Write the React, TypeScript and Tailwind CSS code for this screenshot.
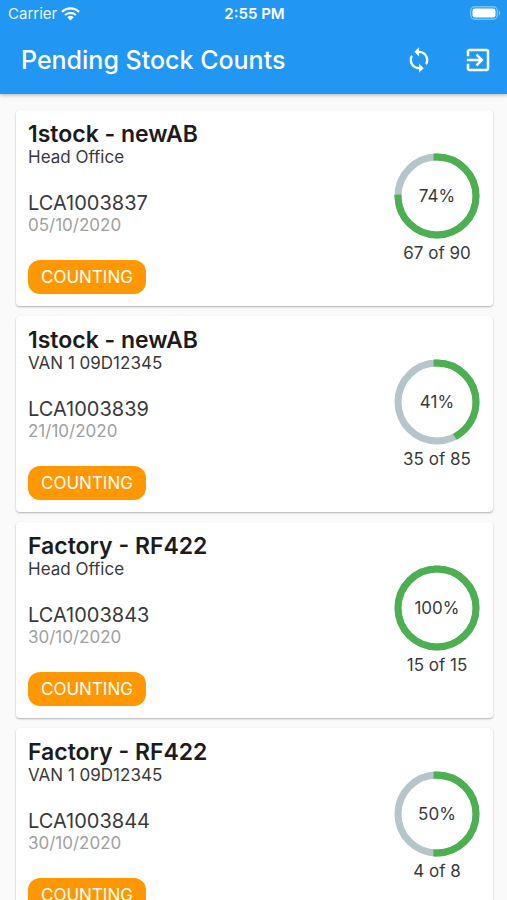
import React from "react";

const stockCounts = [
  {
    id: "LCA1003837",
    title: "1stock - newAB",
    location: "Head Office",
    date: "05/10/2020",
    status: "COUNTING",
    counted: 67,
    total: 90,
  },
  {
    id: "LCA1003839",
    title: "1stock - newAB",
    location: "VAN 1 09D12345",
    date: "21/10/2020",
    status: "COUNTING",
    counted: 35,
    total: 85,
  },
  {
    id: "LCA1003843",
    title: "Factory - RF422",
    location: "Head Office",
    date: "30/10/2020",
    status: "COUNTING",
    counted: 15,
    total: 15,
  },
  {
    id: "LCA1003844",
    title: "Factory - RF422",
    location: "VAN 1 09D12345",
    date: "30/10/2020",
    status: "COUNTING",
    counted: 4,
    total: 8,
  },
];

type StockCount = (typeof stockCounts)[number];

const StatusBar = () => (
  <div className="flex h-7 items-center pl-2 pr-1.5 text-[15px] leading-5">
    <div className="flex flex-1 items-center gap-x-1">
      <span className="text-white/90">Carrier</span>
      <svg viewBox="0 0 19 14" className="h-3.5 w-[19px]" fill="none">
        <path d="M1 4.9a12 12 0 0 1 17 0" stroke="currentColor" strokeWidth="2.2" />
        <path d="M4.1 8.1a7.6 7.6 0 0 1 10.8 0" stroke="currentColor" strokeWidth="2.2" />
        <path d="M9.5 13.4 6.3 10.2a4.7 4.7 0 0 1 6.4 0z" fill="currentColor" />
      </svg>
    </div>
    <span className="font-semibold">2:55 PM</span>
    <div className="flex flex-1 justify-end pb-0.5">
      <svg viewBox="0 0 31 14" className="h-3.5 w-[31px]" fill="none">
        <rect x="0.7" y="0.7" width="26.6" height="12.6" rx="4" stroke="currentColor" strokeWidth="1.4" opacity="0.4" />
        <rect x="2.5" y="2.5" width="23" height="9" rx="2.2" fill="currentColor" />
        <path d="M28.8 4.6c1.9.8 1.9 4 0 4.8z" fill="currentColor" opacity="0.5" />
      </svg>
    </div>
  </div>
);

const AppBar = () => (
  <div className="flex h-[66px] items-center pl-[21px] pr-3.5 pb-0.5">
    <h1 className="flex-1 text-[25px] leading-8 font-medium">
      Pending Stock Counts
    </h1>
    <button type="button" aria-label="Sync" className="mr-[30px]">
      <svg viewBox="0 0 24 24" className="size-7" fill="currentColor">
        <path d="M12 4V1L8 5l4 4V6c3.31 0 6 2.69 6 6 0 1.01-.25 1.97-.7 2.8l1.46 1.46C19.54 15.03 20 13.57 20 12c0-4.42-3.58-8-8-8zm0 14c-3.31 0-6-2.69-6-6 0-1.01.25-1.97.7-2.8L5.24 7.74C4.46 8.97 4 10.43 4 12c0 4.42 3.58 8 8 8v3l4-4-4-4v3z" />
      </svg>
    </button>
    <button type="button" aria-label="Log out">
      <svg viewBox="0 0 24 24" className="size-[30px]" fill="currentColor">
        <path d="M10.09 15.59 11.5 17l5-5-5-5-1.41 1.41L12.67 11H3v2h9.67l-2.58 2.59zM19 3H5c-1.11 0-2 .9-2 2v4h2V5h14v14H5v-4H3v4c0 1.1.89 2 2 2h14c1.1 0 2-.9 2-2V5c0-1.1-.9-2-2-2z" />
      </svg>
    </button>
  </div>
);

const ProgressRing = ({ counted, total }: { counted: number; total: number }) => {
  const percent = Math.floor((counted / total) * 100);
  const circumference = 2 * Math.PI * 39;

  return (
    <div className="flex w-[86px] shrink-0 flex-col items-center text-[17px]">
      <div className="grid place-items-center">
        <svg viewBox="0 0 86 86" className="col-start-1 row-start-1 size-[86px] -rotate-90" fill="none">
          <circle cx="43" cy="43" r="39" stroke="#b6c5c9" strokeWidth="7" />
          <circle
            cx="43"
            cy="43"
            r="39"
            stroke="#4caf50"
            strokeWidth="7"
            strokeLinecap="square"
            strokeDasharray={`${(circumference * percent) / 100} ${circumference}`}
          />
        </svg>
        <span className="col-start-1 row-start-1 leading-5">{percent}%</span>
      </div>
      <span className="mt-1 leading-5 whitespace-nowrap">
        {counted} of {total}
      </span>
    </div>
  );
};

const StockCard = ({ item }: { item: StockCount }) => (
  <li className="flex items-center justify-between rounded-sm bg-white py-3 pl-3 pr-[13px] shadow-[0_1px_2px_rgba(0,0,0,0.3)]">
    <div className="flex flex-col items-start">
      <h2 className="text-[23px] leading-[25px] font-semibold text-[#1c1c1c]">
        {item.title}
      </h2>
      <span className="text-[17px] leading-5">{item.location}</span>
      <span className="mt-6 text-xl leading-6">{item.id}</span>
      <span className="text-[17px] leading-5 text-[#a0a0a0]">{item.date}</span>
      <span className="mt-[25px] rounded-xl bg-[#ff9800] px-[13px] py-1.5 text-[17px] leading-[22px] text-white">
        {item.status}
      </span>
    </div>
    <ProgressRing counted={item.counted} total={item.total} />
  </li>
);

const App = () => {
  return (
    <div className="flex h-screen flex-col bg-[#fafafa] font-['Inter','Liberation_Sans',sans-serif] text-[#3a3a3a]">
      <header className="z-10 shrink-0 bg-[#2196f3] text-white shadow-[0_1px_4px_rgba(0,0,0,0.3)]">
        <StatusBar />
        <AppBar />
      </header>
      <main className="flex-1 overflow-y-auto">
        <ul className="flex flex-col gap-y-2.5 pt-4 pr-3.5 pb-4 pl-4">
          {stockCounts.map((item) => (
            <StockCard key={item.id} item={item} />
          ))}
        </ul>
      </main>
    </div>
  );
};

export default App;
